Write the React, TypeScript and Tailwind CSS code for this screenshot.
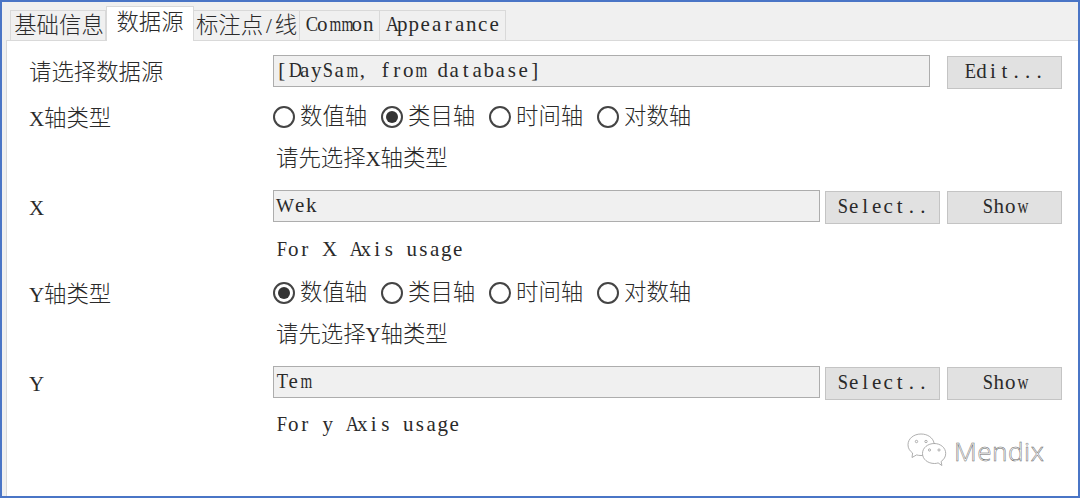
import React from 'react';

const isCjk = /[\u4e00-\u9fff]/;

// the latin in this dialog is a fixed-cell bitmap-ish font, so every char gets its own 11.5px cell
const glyphClass = (ch: string) => {
  if (ch === 'W') return 'inline-block w-[18px] text-[19px] text-center';
  if (ch === 'X' || ch === 'Y') return 'inline-block w-[15px] text-center';
  if ('mwM'.includes(ch)) return 'inline-block w-[11.5px] text-center scale-x-[0.72]';
  if ('ACDEFSTO'.includes(ch)) return 'inline-block w-[11.5px] text-center scale-x-[0.88]';
  return 'inline-block w-[11.5px] text-center';
};

const Txt = ({ children }: { children: string }) => (
  <span className="whitespace-pre">
    {children.split(/([\u4e00-\u9fff]+)/).map((part, i) =>
      isCjk.test(part) ? (
        <span key={i} className="text-[22.4px] font-['Noto_Sans_CJK_SC',sans-serif] font-light">
          {part}
        </span>
      ) : (
        part.split('').map((ch, j) => (
          <span key={`${i}-${j}`} className={glyphClass(ch)}>
            {ch}
          </span>
        ))
      ),
    )}
  </span>
);

const Tab = ({ label, active = false, w }: { label: string; active?: boolean; w: string }) =>
  active ? (
    <div className={`${w} h-[35px] bg-white border border-b-0 border-[#d9d9d9] flex items-start justify-center relative z-10 -mb-[1px] leading-[27px]`}>
      <Txt>{label}</Txt>
    </div>
  ) : (
    <div className={`${w} h-[30px] pb-[2px] bg-[#f0f0f0] border border-b-0 border-l-0 first:border-l first:pl-[2px] border-[#d9d9d9] flex items-center justify-center`}>
      <Txt>{label}</Txt>
    </div>
  );

const Field = ({ value, w }: { value: string; w: string }) => (
  <div className={`${w} h-[32px] pb-[2px] bg-[#f0f0f0] border border-[#adadad] pl-[2px] flex items-center leading-none`}>
    <Txt>{value}</Txt>
  </div>
);

const Btn = ({ label, w }: { label: string; w: string }) => (
  <div className={`${w} h-[33px] pb-[3px] mt-[1px] bg-[#e1e1e1] border border-[#c4c4c4] flex items-center justify-center leading-none`}>
    <Txt>{label}</Txt>
  </div>
);

const Radio = ({ label, checked = false }: { label: string; checked?: boolean }) => (
  <div className="w-[108px] flex items-center gap-[5px]">
    <div className="w-[22px] h-[22px] rounded-full border-2 border-[#444] flex items-center justify-center bg-white">
      {checked && <div className="w-[12px] h-[12px] rounded-full bg-[#333]" />}
    </div>
    <div className="pb-[2px]">
      <Txt>{label}</Txt>
    </div>
  </div>
);

const AXES = ['数值轴', '类目轴', '时间轴', '对数轴'];

const RadioRow = ({ name, selected, mt }: { name: string; selected: number; mt: string }) => (
  <div className={`flex items-center h-[32px] ${mt}`}>
    <div className="w-[244px] pt-[2px]">
      <Txt>{name}</Txt>
    </div>
    <div className="flex">
      {AXES.map((a, i) => (
        <Radio key={a} label={a} checked={i === selected} />
      ))}
    </div>
  </div>
);

const Hint = ({ text, mt }: { text: string; mt: string }) => (
  <div className={`flex items-center h-[32px] pl-[247px] ${mt}`}>
    <Txt>{text}</Txt>
  </div>
);

const ColumnRow = ({ name, value, mt }: { name: string; value: string; mt: string }) => (
  <div className={`flex items-start h-[32px] ${mt}`}>
    <div className="w-[244px] pt-[3px]">
      <Txt>{name}</Txt>
    </div>
    <Field value={value} w="w-[547px]" />
    <div className="ml-[5px]">
      <Btn label="Select.." w="w-[115px]" />
    </div>
    <div className="ml-[7px]">
      <Btn label="Show" w="w-[115px]" />
    </div>
  </div>
);

const Watermark = () => (
  <div className="absolute left-[905px] top-[431px] flex items-center gap-[7px]">
    <svg width="40" height="36" viewBox="0 0 40 36" fill="#fff" stroke="#9a9a9a" strokeWidth="0.8">
      <path d="M14 1C6.5 1 1 5.8 1 11.8c0 3.4 1.8 6.2 4.6 8.2L5 24.5l4.6-2.6c1.4.4 2.6.6 4.4.6 1 0 1.6 0 2.4-.2" />
      <path d="M14 1c6.6 0 12 3.7 13 9" />
      <circle cx="9.5" cy="8.5" r="1.2" fill="none" />
      <circle cx="19" cy="8.5" r="1.2" fill="none" />
      <path d="M27.5 10.5c-6.8 0-12 4.3-12 10s5.2 10 12 10c1.4 0 2.4-.2 3.6-.6l3.8 2.6-.8-4c2.8-2 4.6-4.6 4.6-8 0-5.7-5-10-11.6-10z" />
      <circle cx="22.5" cy="17" r="1.1" fill="none" />
      <circle cx="32" cy="17" r="1.1" fill="none" />
    </svg>
    <span
      className="font-['Noto_Sans',sans-serif] font-light text-[26px] leading-none tracking-[0.5px] text-white"
      style={{ WebkitTextStroke: '0.5px #666' }}
    >
      Mendix
    </span>
  </div>
);

export default function App() {
  return (
    <div className="relative w-[1080px] h-[498px] border-2 border-[#4a75c6] bg-[#f0f0f0] flex flex-col overflow-hidden text-[21px] text-[#2a2a2a] font-['Liberation_Serif','Noto_Sans_CJK_SC',serif]">
      <div className="flex items-end h-[38px] pl-[8px] shrink-0">
        <Tab label="基础信息" w="w-[96px]" />
        <Tab label="数据源" active w="w-[88px]" />
        <Tab label="标注点/线" w="w-[106px]" />
        <Tab label="Common" w="w-[80px]" />
        <Tab label="Appearance" w="w-[126px]" />
      </div>
      <div className="flex-1 ml-[4px] bg-white border-t border-l border-[#d9d9d9] pl-[22px] pt-[14px] flex flex-col">
        <div className="flex items-start h-[32px]">
          <div className="w-[244px] -mt-[1px]">
            <Txt>请选择数据源</Txt>
          </div>
          <Field value="[DaySam, from database]" w="w-[657px]" />
          <div className="ml-[17px]">
            <Btn label="Edit..." w="w-[115px]" />
          </div>
        </div>
        <RadioRow name="X轴类型" selected={1} mt="mt-[14px]" />
        <Hint text="请先选择X轴类型" mt="mt-[9px]" />
        <ColumnRow name="X" value="Wek" mt="mt-[16px]" />
        <Hint text="For X Axis usage" mt="mt-[12px]" />
        <RadioRow name="Y轴类型" selected={0} mt="mt-[11px]" />
        <Hint text="请先选择Y轴类型" mt="mt-[9px]" />
        <ColumnRow name="Y" value="Tem" mt="mt-[16px]" />
        <Hint text="For y Axis usage" mt="mt-[11px]" />
      </div>
      <Watermark />
    </div>
  );
}
